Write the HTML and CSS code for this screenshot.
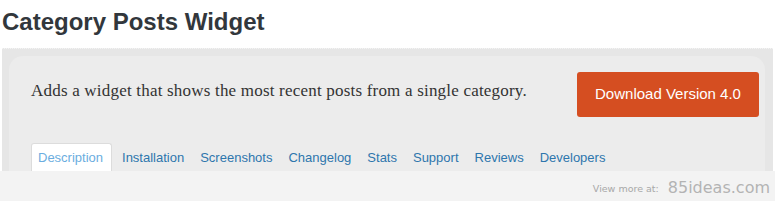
FILE: index.html
```html
<!DOCTYPE html>
<html>
<head>
<meta charset="utf-8">
<link rel="stylesheet" href="styles.css">
</head>
<body>
<h1 class="title">Category Posts Widget</h1>
<div class="banner">
  <div class="panel">
    <div class="intro">
      <p class="desc">Adds a widget that shows the most recent posts from a single category.</p>
      <a class="download" href="#">Download Version 4.0</a>
    </div>
    <ul class="tabs">
      <li class="tab active">Description</li>
      <li class="tab">Installation</li>
      <li class="tab">Screenshots</li>
      <li class="tab">Changelog</li>
      <li class="tab">Stats</li>
      <li class="tab">Support</li>
      <li class="tab">Reviews</li>
      <li class="tab">Developers</li>
    </ul>
  </div>
</div>
<div class="footer">
  <span class="more">View more at:</span>
  <span class="site">85ideas.com</span>
</div>
</body>
</html>
```
FILE: styles.css
```css
html, body {
  margin: 0;
  padding: 0;
  background: #ffffff;
  width: 777px;
  height: 201px;
  overflow: hidden;
}

.title {
  margin: 8px 0 12px 2px;
  font-family: "Liberation Sans", Arial, sans-serif;
  font-weight: bold;
  font-size: 24px;
  line-height: 28px;
  color: #32373c;
}

.banner {
  margin: 0 4px 0 2px;
  height: 123px;
  background: #e6e6e6;
  border-top: 1px dotted #f4f4f4;
  box-sizing: border-box;
  padding: 7px 8px 0 7px;
  overflow: hidden;
}

.panel {
  background: #ececec;
  border-radius: 14px 14px 0 0;
  height: 140px;
  padding: 0 0 0 22px;
  box-sizing: border-box;
}

.intro {
  display: flex;
  align-items: flex-start;
  justify-content: space-between;
  padding-top: 16px;
  padding-right: 6px;
}

.desc {
  margin: 9px 0 0 0;
  font-family: "Liberation Serif", Georgia, serif;
  font-size: 17px;
  line-height: 20px;
  letter-spacing: 0.2px;
  color: #333;
}

.download {
  display: flex;
  align-items: center;
  justify-content: center;
  width: 182px;
  height: 45px;
  padding-bottom: 3px;
  box-sizing: border-box;
  background: #d54e21;
  border-radius: 3px;
  color: #ffffff;
  text-decoration: none;
  font-family: "Liberation Sans", Arial, sans-serif;
  font-size: 15px;
}

.tabs {
  list-style: none;
  display: flex;
  margin: 26px 0 0 0;
  padding: 0;
}

.tab {
  font-family: "Liberation Sans", Arial, sans-serif;
  font-size: 13px;
  line-height: 28px;
  padding: 0 7px;
  border: 1px solid transparent;
  border-bottom: none;
  color: #2e76ad;
}

.tab.active {
  background: #ffffff;
  border-color: #dcdcdc;
  border-radius: 3px 3px 0 0;
  color: #6bade0;
  padding: 0 8px 0 6px;
  margin-right: 2px;
}

.footer {
  width: 775px;
  height: 30px;
  background: #f3f3f3;
  display: flex;
  align-items: center;
  justify-content: flex-end;
  gap: 9px;
  box-sizing: border-box;
  padding-right: 5px;
}

.more {
  font-family: "DejaVu Sans", Verdana, sans-serif;
  font-size: 9.5px;
  color: #a8a8a8;
  margin-top: 5px;
}

.site {
  font-family: "DejaVu Sans", Verdana, sans-serif;
  font-size: 16px;
  color: #b3b3b3;
  margin-top: 2px;
}
```
